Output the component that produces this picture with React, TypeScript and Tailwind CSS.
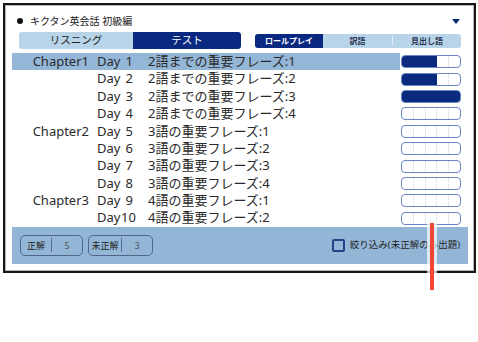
import React from 'react';

type Row = { chapter?: string; day: string; phrase: string; progress: number };

const rows: Row[] = [
  { chapter: 'Chapter1', day: '1', phrase: '2語までの重要フレーズ:1', progress: 60 },
  { day: '2', phrase: '2語までの重要フレーズ:2', progress: 60 },
  { day: '3', phrase: '2語までの重要フレーズ:3', progress: 100 },
  { day: '4', phrase: '2語までの重要フレーズ:4', progress: 0 },
  { chapter: 'Chapter2', day: '5', phrase: '3語の重要フレーズ:1', progress: 0 },
  { day: '6', phrase: '3語の重要フレーズ:2', progress: 0 },
  { day: '7', phrase: '3語の重要フレーズ:3', progress: 0 },
  { day: '8', phrase: '3語の重要フレーズ:4', progress: 0 },
  { chapter: 'Chapter3', day: '9', phrase: '4語の重要フレーズ:1', progress: 0 },
  { day: '10', phrase: '4語の重要フレーズ:2', progress: 0 },
];

function ProgressBar({ value }: { value: number }) {
  return (
    <div className="relative w-[60px] h-[13px] rounded-[4px] border border-[#6a86c2] bg-white overflow-hidden">
      <div className="absolute inset-0 flex">
        <div className="flex-1 border-r border-dotted border-[#c9d3e4]" />
        <div className="flex-1 border-r border-dotted border-[#c9d3e4]" />
        <div className="flex-1 border-r border-dotted border-[#c9d3e4]" />
        <div className="flex-1 border-r border-dotted border-[#c9d3e4]" />
        <div className="flex-1" />
      </div>
      {value > 0 && (
        <div className="absolute left-0 top-0 bottom-0 bg-[#0a2a7e]" style={{ width: `${value}%` }} />
      )}
    </div>
  );
}

function ListRow({ row, selected }: { row: Row; selected: boolean }) {
  return (
    <div className="flex items-center h-[17.4px]">
      <div
        className={`flex items-center w-[388px] h-full text-[13px] text-[#2a2a2a] ${
          selected ? 'bg-[#94b7d8]' : ''
        }`}
      >
        <span className="w-[77px] text-right">{row.chapter ?? ''}</span>
        <span className="ml-[8px] w-[24px]">Day</span>
        <span className="w-[12px] text-right">{row.day}</span>
        <span className="ml-[15px]">{row.phrase}</span>
      </div>
      <div className="ml-[1px]">
        <ProgressBar value={row.progress} />
      </div>
    </div>
  );
}

function ScoreButton({ label, count, labelWidth }: { label: string; count: number; labelWidth: string }) {
  return (
    <div className="flex items-center h-[21px] rounded-[5px] border border-[#50678a]">
      <span className={`${labelWidth} text-center text-[9px] text-[#222]`}>{label}</span>
      <span className="w-px h-[14px] bg-[#5a6f90]" />
      <span className="w-[30px] text-center text-[9px] text-[#555]">{count}</span>
    </div>
  );
}

export default function App() {
  return (
    <div className="relative w-[478px] h-[342px] bg-white font-['Noto_Sans','Noto_Sans_CJK_JP',sans-serif]">
      <div className="ml-[3px] pt-[3px]">
        <div className="w-[473px] h-[270px] border-2 border-[#151515] shadow-[inset_0_0_0_1px_#b5b5b5] flex flex-col pl-[7px] pr-[6px]">
          {/* title */}
          <div className="flex items-center h-[27px] pt-[5px] pl-[5px] pr-[8px]">
            <span className="w-[6px] h-[6px] rounded-full bg-[#111]" />
            <span className="ml-[7px] text-[10px] leading-[14px] text-[#222]">キクタン英会話 初級編</span>
            <span className="ml-auto w-0 h-0 border-l-[4px] border-r-[4px] border-t-[5px] border-l-transparent border-r-transparent border-t-[#0a2a6e]" />
          </div>

          {/* tabs */}
          <div className="flex items-center h-[17px]">
            <div className="ml-[7px] flex w-[222px] h-[17px] rounded-[3px] overflow-hidden text-[10.5px] leading-[17px]">
              <div className="w-[114px] text-center bg-[#b8d4e8] text-[#222]">リスニング</div>
              <div className="w-[108px] text-center bg-[#08297f] text-white">テスト</div>
            </div>
            <div className="ml-[14px] flex w-[206px] h-[14px] rounded-[3px] overflow-hidden bg-[#b8d4e8] text-[8px] leading-[14px] font-bold">
              <div className="w-[68px] text-center bg-[#08297f] text-white">ロールプレイ</div>
              <div className="w-[69px] text-center text-[#2b3350]">訳語</div>
              <div className="self-center w-px h-[9px] bg-[#e8f1f8]" />
              <div className="w-[68px] text-center text-[#2b3350]">見出し語</div>
            </div>
          </div>

          {/* list */}
          <div className="mt-[4px] flex flex-col">
            {rows.map((row, i) => (
              <ListRow key={row.day} row={row} selected={i === 0} />
            ))}
          </div>

          {/* footer */}
          <div className="flex items-center h-[37px] bg-[#94b6d6] pl-[8px] pr-[8px]">
            <ScoreButton label="正解" count={5} labelWidth="w-[30px]" />
            <div className="ml-[5px]">
              <ScoreButton label="未正解" count={3} labelWidth="w-[32px]" />
            </div>
            <div className="ml-auto flex items-center">
              <span className="w-[13px] h-[13px] rounded-[2px] border-2 border-[#23418a]" />
              <span className="ml-[5px] text-[9.5px] text-[#222]">絞り込み(未正解のみ出題)</span>
            </div>
          </div>
        </div>
      </div>

      {/* red marker */}
      <div className="absolute left-[430px] top-[223px] w-[4px] h-[67px] bg-[#f04636] shadow-[0_0_0_3px_rgba(255,255,255,0.7)]" />
    </div>
  );
}
